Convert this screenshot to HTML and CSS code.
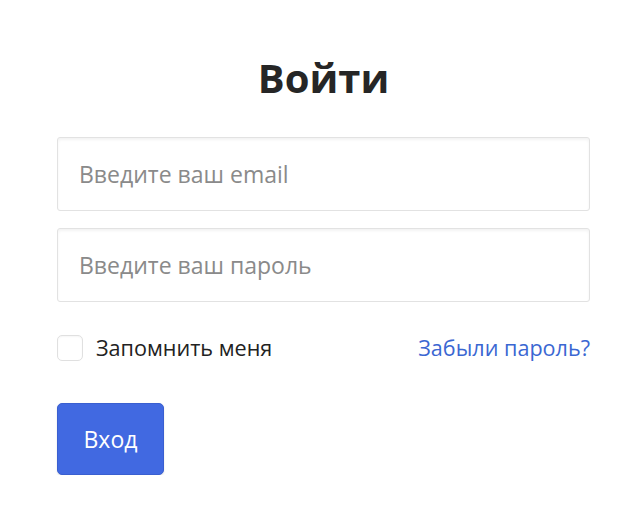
FILE: index.html
```html
<!DOCTYPE html>
<html lang="ru">
<head>
  <meta charset="UTF-8" />
  <meta name="viewport" content="width=device-width, initial-scale=1.0"/>
  <title>Войти</title>
  <link rel="stylesheet" href="styles.css">
</head>
<body>
  <form class="login">
    <h1>Войти</h1>
    <input class="field" type="email" placeholder="Введите ваш email" />
    <input class="field" type="password" placeholder="Введите ваш пароль" />

    <div class="options">
      <label class="remember">
        <span class="box"></span>
        Запомнить меня
      </label>
      <a href="#" class="forgot">Забыли пароль?</a>
    </div>

    <button type="button" class="submit">Вход</button>
  </form>
</body>
</html>
```

FILE: styles.css
```css
body {
  margin: 0;
  padding: 0;
  font-family: "Open Sans", sans-serif;
  background-color: #ffffff;
  color: #222222;
}

.login {
  width: 533px;
  margin-left: 57px;
  display: flex;
  flex-direction: column;
}

h1 {
  font-size: 40px;
  font-weight: 700;
  text-align: center;
  color: #262626;
  margin: 54px 0 35px;
  line-height: 48px;
}

.field {
  box-sizing: border-box;
  height: 74px;
  padding: 0 21px;
  margin-bottom: 17px;
  border: 1px solid #e2e2e2;
  border-radius: 3px;
  box-shadow: inset 0 2px 3px rgba(0, 0, 0, 0.05);
  font-family: "Open Sans", sans-serif;
  font-size: 23px;
  color: #333333;
  outline: none;
}

.field::placeholder {
  color: #8a8a8a;
}

.options {
  display: flex;
  justify-content: space-between;
  align-items: center;
  margin-top: 14px;
}

.remember {
  display: flex;
  align-items: center;
  gap: 13px;
  font-size: 21.6px;
  color: #222222;
}

.box {
  width: 26px;
  height: 26px;
  box-sizing: border-box;
  border: 1px solid #e0e0e0;
  border-radius: 5px;
  box-shadow: inset 0 1px 2px rgba(0, 0, 0, 0.04);
}

.forgot {
  font-size: 21.6px;
  color: #3b67d2;
  text-decoration: none;
}

.submit {
  align-self: flex-start;
  margin-top: 41px;
  width: 107px;
  height: 72px;
  border: 1px solid #3a5fd0;
  border-radius: 5px;
  background-color: #4169e1;
  color: #ffffff;
  font-family: "Open Sans", sans-serif;
  font-size: 23px;
  box-shadow: 0 1px 2px rgba(0, 0, 0, 0.12);
}
```
